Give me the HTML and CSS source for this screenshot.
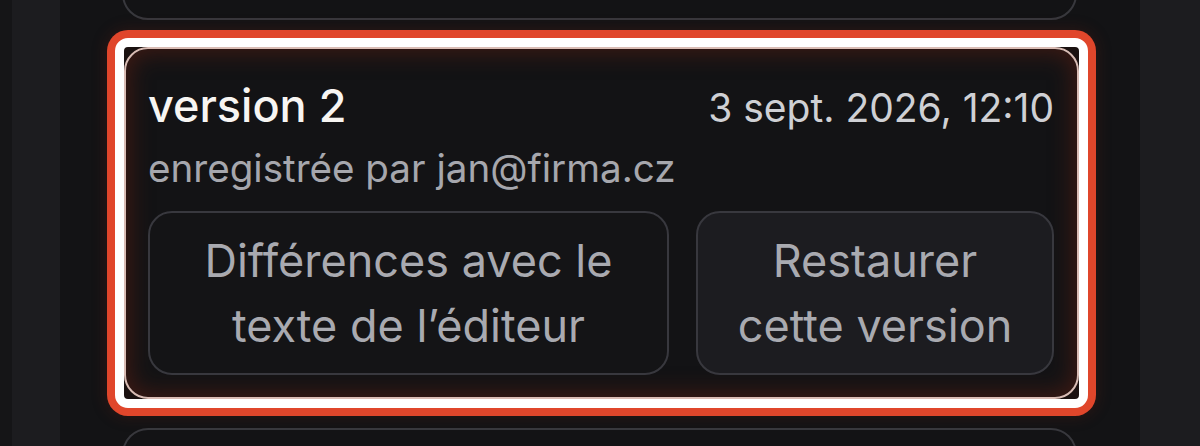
FILE: index.html
```html
<!DOCTYPE html>
<html lang="fr">
<head>
<meta charset="utf-8">
<title>Versions</title>
<link rel="stylesheet" href="styles.css">
</head>
<body>
<div class="app">
  <div class="edge"></div>
  <aside class="side side-left"></aside>
  <main class="main">
    <div class="list">
      <div class="card card-prev"></div>
      <div class="ring">
        <section class="card card-selected">
          <div class="card-head">
            <h2 class="title">version 2</h2>
            <span class="date">3 sept. 2026, 12:10</span>
          </div>
          <p class="author">enregistrée par jan@firma.cz</p>
          <div class="actions">
            <button class="btn btn-diff">Différences avec le texte de l’éditeur</button>
            <button class="btn btn-restore">Restaurer cette version</button>
          </div>
        </section>
      </div>
      <div class="card card-next"></div>
    </div>
  </main>
  <aside class="side side-right"></aside>
</div>
</body>
</html>
```

FILE: styles.css
```css
* { box-sizing: border-box; }

html, body {
  margin: 0;
  padding: 0;
  height: 100%;
  background: #131315;
  overflow: hidden;
  font-family: "Inter", "Noto Sans", sans-serif;
}

.app {
  display: flex;
  height: 446px;
  overflow: hidden;
}

.edge {
  width: 12px;
  background: #151517;
}

.side {
  background: #1c1c1f;
}

.side-left { width: 48px; }
.side-right { width: 60px; }

.main {
  flex: 1;
  background: #131315;
  padding: 0 63px 0 62px;
}

.list {
  display: flex;
  flex-direction: column;
  gap: 10px;
  margin-top: -100px;
}

.card {
  border: 2px solid #38383d;
  border-radius: 26px;
  background: #131315;
}

.card-prev { height: 120px; }
.card-next { height: 120px; margin-top: 10px; }

.ring {
  margin: 8px -11px 0 -7px;
  border: 9px solid #ffffff;
  border-radius: 13px;
  background: #1a1110;
  box-shadow: 0 0 0 8px #e0462b, 0 0 14px 10px rgba(90, 30, 20, 0.3);
}

.card-selected {
  margin: 0;
  border: 2px solid #d9bcb4;
  border-radius: 24px;
  background: #131315;
  box-shadow: inset 0 0 22px 4px rgba(80, 28, 18, 0.7);
  padding: 31px 23px 22px 22px;
}

.card-head {
  display: flex;
  justify-content: space-between;
  align-items: baseline;
}

.title {
  margin: 0;
  font-size: 45px;
  font-weight: 500;
  line-height: 52px;
  color: #f7f5f2;
}

.date {
  font-size: 39px;
  color: #cfd0d4;
  line-height: 52px;
}

.author {
  margin: 10px 0 19px;
  font-size: 38.6px;
  line-height: 48px;
  color: #a6a7ad;
}

.actions {
  display: grid;
  grid-template-columns: 1.455fr 1fr;
  gap: 27px;
}

.btn {
  font-family: inherit;
  font-size: 45px;
  line-height: 65px;
  color: #a9aab0;
  border: 2px solid #38383e;
  border-radius: 24px;
  padding: 15px 24px;
  text-align: center;
}

.btn-diff { background: #141416; }
.btn-restore { background: #1c1c20; }
```
